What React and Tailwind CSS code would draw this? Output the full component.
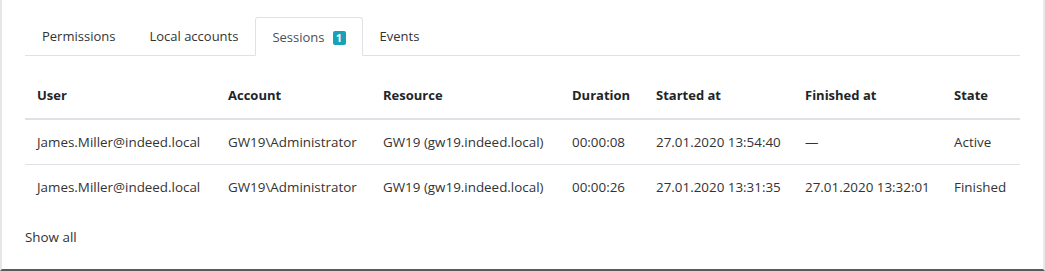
import React from "react";

const columns = [
  { key: "user", label: "User", width: "w-[191px]" },
  { key: "account", label: "Account", width: "w-[155px]" },
  { key: "resource", label: "Resource", width: "w-[189px]" },
  { key: "duration", label: "Duration", width: "w-[84px]" },
  { key: "started", label: "Started at", width: "w-[149px]" },
  { key: "finished", label: "Finished at", width: "w-[149px]" },
  { key: "state", label: "State", width: "w-[78px]" },
];

const sessions = [
  {
    user: "James.Miller@indeed.local",
    account: "GW19\\Administrator",
    resource: "GW19 (gw19.indeed.local)",
    duration: "00:00:08",
    started: "27.01.2020 13:54:40",
    finished: "—",
    state: "Active",
  },
  {
    user: "James.Miller@indeed.local",
    account: "GW19\\Administrator",
    resource: "GW19 (gw19.indeed.local)",
    duration: "00:00:26",
    started: "27.01.2020 13:31:35",
    finished: "27.01.2020 13:32:01",
    state: "Finished",
  },
];

const tabs = ["Permissions", "Local accounts", "Sessions", "Events"];

function App() {
  const active = "Sessions";

  return (
    <div
      className="h-[271px] w-[1045px] overflow-hidden bg-white border-l-2 border-l-[#e4e6e9] border-r-2 border-r-[#e9e9e9] border-b-2 border-b-[#5a5a5a] text-[13px] text-[#333]"
      style={{ fontFamily: '"Open Sans", "Noto Sans", sans-serif' }}
    >
      <div className="pl-[23px] pr-[23px] pt-[17px]">
        {/* Tabs */}
        <div className="flex border-b border-[#dee2e6]">
          {tabs.map((tab) => (
            <div
              key={tab}
              className={
                tab === active
                  ? "-mb-px flex h-[39px] items-center gap-2 rounded-t-[3px] border border-[#dee2e6] border-b-white bg-white pt-[2px] pl-4 pr-4 text-[#495057]"
                  : "flex h-[38px] items-center border border-transparent pt-[2px] px-4 text-[#333]"
              }
            >
              <span>{tab}</span>
              {tab === "Sessions" && (
                <span className="flex h-[14px] min-w-[13px] items-center justify-center rounded-[2px] bg-[#17a2b8] px-[3px] text-[11px] font-bold leading-none text-white">
                  1
                </span>
              )}
            </div>
          ))}
        </div>

        {/* Sessions table */}
        <table className="mt-[17px] w-full border-collapse text-left">
          <thead>
            <tr className="border-b-2 border-[#dee2e6]">
              {columns.map((col) => (
                <th
                  key={col.key}
                  className={`${col.width} h-[46px] px-3 align-middle font-bold text-[#212529]`}
                >
                  {col.label}
                </th>
              ))}
            </tr>
          </thead>
          <tbody>
            {sessions.map((s, i) => (
              <tr key={i} className={i === 0 ? "border-b border-[#dee2e6]" : ""}>
                {columns.map((col) => (
                  <td
                    key={col.key}
                    className="h-[45px] whitespace-nowrap px-3 align-middle text-[13.4px]"
                  >
                    {s[col.key]}
                  </td>
                ))}
              </tr>
            ))}
          </tbody>
        </table>

        <div className="mt-[18px] text-[13.4px] text-[#333]">Show all</div>
      </div>
    </div>
  );
}

export default App;
